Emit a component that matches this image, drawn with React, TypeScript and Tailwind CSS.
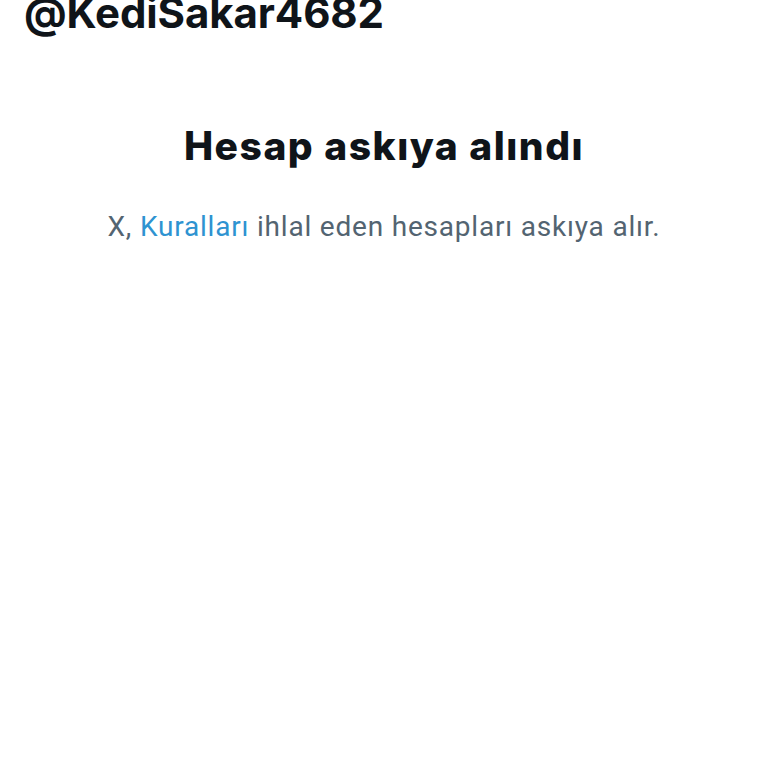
export default function App() {
  return (
    <div className="min-h-[768px] w-[768px] bg-white font-['Inter',sans-serif]">
      {/* Kullanıcı adı (üstte kırpılmış) */}
      <div className="h-[40px] overflow-hidden">
        <p className="mt-[-12px] pl-[24px] text-[42px] font-bold leading-[50px] tracking-[-0.1px] text-[#0f1419]">
          @KediSakar4682
        </p>
      </div>

      <div className="flex flex-col items-center pt-[82px]">
        <h1 className="text-[39px] font-extrabold leading-[48px] tracking-[1.5px] text-[#0f1419]">
          Hesap askıya alındı
        </h1>
        <p className="mt-[40px] font-['Roboto',sans-serif] text-[28px] leading-[34px] tracking-[0.8px] text-[#536471]">
          X, <span className="text-[#2e93d1]">Kuralları</span> ihlal eden hesapları askıya alır.
        </p>
      </div>
    </div>
  );
}
